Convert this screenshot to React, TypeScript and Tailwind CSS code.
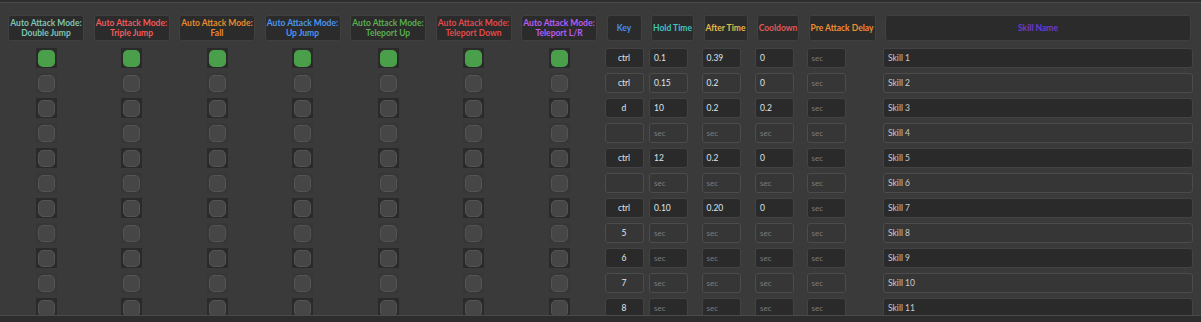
import React from 'react';

type Row = {
  checked: boolean;
  key: string;
  hold: string;
  after: string;
  cooldown: string;
  pre: string;
  name: string;
};

const modes = [
  { line2: 'Double Jump', color: 'text-[#7fc4b4]' },
  { line2: 'Triple Jump', color: 'text-[#f05a5a]' },
  { line2: 'Fall', color: 'text-[#e68a2c]' },
  { line2: 'Up Jump', color: 'text-[#4b95f0]' },
  { line2: 'Teleport Up', color: 'text-[#5aae52]' },
  { line2: 'Teleport Down', color: 'text-[#e04a4a]' },
  { line2: 'Teleport L/R', color: 'text-[#b85cf2]' }
];

const fields = [
  { label: 'Key', color: 'text-[#4a8ef0]' },
  { label: 'Hold Time', color: 'text-[#3fc4c4]' },
  { label: 'After Time', color: 'text-[#e8b84a]' },
  { label: 'Cooldown', color: 'text-[#e05858]' },
  { label: 'Pre Attack Delay', color: 'text-[#ee8e30]' }
];

const rows: Row[] = [
  { checked: true, key: 'ctrl', hold: '0.1', after: '0.39', cooldown: '0', pre: '', name: 'Skill 1' },
  { checked: false, key: 'ctrl', hold: '0.15', after: '0.2', cooldown: '0', pre: '', name: 'Skill 2' },
  { checked: false, key: 'd', hold: '10', after: '0.2', cooldown: '0.2', pre: '', name: 'Skill 3' },
  { checked: false, key: '', hold: '', after: '', cooldown: '', pre: '', name: 'Skill 4' },
  { checked: false, key: 'ctrl', hold: '12', after: '0.2', cooldown: '0', pre: '', name: 'Skill 5' },
  { checked: false, key: '', hold: '', after: '', cooldown: '', pre: '', name: 'Skill 6' },
  { checked: false, key: 'ctrl', hold: '0.10', after: '0.20', cooldown: '0', pre: '', name: 'Skill 7' },
  { checked: false, key: '5', hold: '', after: '', cooldown: '', pre: '', name: 'Skill 8' },
  { checked: false, key: '6', hold: '', after: '', cooldown: '', pre: '', name: 'Skill 9' },
  { checked: false, key: '7', hold: '', after: '', cooldown: '', pre: '', name: 'Skill 10' },
  { checked: false, key: '8', hold: '', after: '', cooldown: '', pre: '', name: 'Skill 11' }
];

const headerBox =
  'h-[26px] mb-[2px] rounded-[3px] bg-[#2b2b2b] border border-[#404040] flex flex-col items-center justify-center text-center text-[8.5px] leading-[10px] font-bold whitespace-nowrap overflow-hidden';

function Cell({ value, dark, center }: { value: string; dark: boolean; center?: boolean }) {
  return (
    <div
      className={`ml-[-2px] w-[39px] h-[20px] rounded-[3px] border flex items-center px-[4px] text-[8.5px] ${
        dark ? 'bg-[#2a2a2a] border-[#434343]' : 'bg-[#363636] border-[#4c4c4c]'
      } ${center ? 'justify-center' : ''}`}
    >
      {value ? (
        <span className={center ? 'text-[#e6e6e6]' : 'text-[#dde4ee]'}>{value}</span>
      ) : center ? null : (
        <span className="text-[#7c7c7c] text-[8px]">sec</span>
      )}
    </div>
  );
}

function Check({ checked, dark }: { checked: boolean; dark: boolean }) {
  return (
    <div
      className={`justify-self-center w-[21px] h-[20px] flex items-center justify-center ${
        dark ? 'bg-[#2a2a2a]' : 'bg-[#373737]'
      }`}
    >
      {checked ? (
        <div className="w-[17px] h-[17px] rounded-[5px] bg-[#4aa04a]" />
      ) : (
        <div className="w-[17px] h-[17px] rounded-[5px] bg-[#464646] border border-[#545454]" />
      )}
    </div>
  );
}

export default function App() {
  return (
    <div
      className="w-[1201px] h-[322px] bg-[#3a3a3a] overflow-hidden flex flex-col"
      style={{ fontFamily: 'Lato, "Noto Sans", sans-serif' }}
    >
      <div className="h-[2px] bg-[#2d2d2d]" />
      <div className="h-px bg-[#4a4a4a]" />
      <div className="flex-1 overflow-hidden pl-[8px] pt-[12px]">
        <div className="grid grid-cols-[repeat(7,76px)_35px_43px_44px_42px_67px_306px] gap-x-[9.5px] gap-y-[5px] items-start">
          {/* header */}
          {modes.map((m) => (
            <div key={m.line2} className={`${headerBox} ${m.color}`}>
              <span>Auto Attack Mode:</span>
              <span>{m.line2}</span>
            </div>
          ))}
          {fields.map((f) => (
            <div key={f.label} className={`${headerBox} ${f.color}`}>
              {f.label}
            </div>
          ))}
          <div className={`${headerBox} text-[#6a3ad6]`}>Skill Name</div>

          {/* rows */}
          {rows.map((r, i) => {
            const dark = i % 2 === 0;
            return (
              <React.Fragment key={r.name}>
                {modes.map((m) => (
                  <Check key={m.line2} checked={r.checked} dark={dark} />
                ))}
                <Cell value={r.key} dark={dark} center />
                <Cell value={r.hold} dark={dark} />
                <Cell value={r.after} dark={dark} />
                <Cell value={r.cooldown} dark={dark} />
                <Cell value={r.pre} dark={dark} />
                <div
                  className={`ml-[-2px] w-[310px] h-[20px] rounded-[3px] border flex items-center px-[4px] text-[8.5px] text-[#cacaca] ${
                    dark ? 'bg-[#2a2a2a] border-[#434343]' : 'bg-[#363636] border-[#4c4c4c]'
                  }`}
                >
                  {r.name}
                </div>
              </React.Fragment>
            );
          })}
        </div>
      </div>
      <div className="h-px bg-[#4a4a4a]" />
      <div className="h-[6px] bg-[#2d2d2d]" />
    </div>
  );
}
